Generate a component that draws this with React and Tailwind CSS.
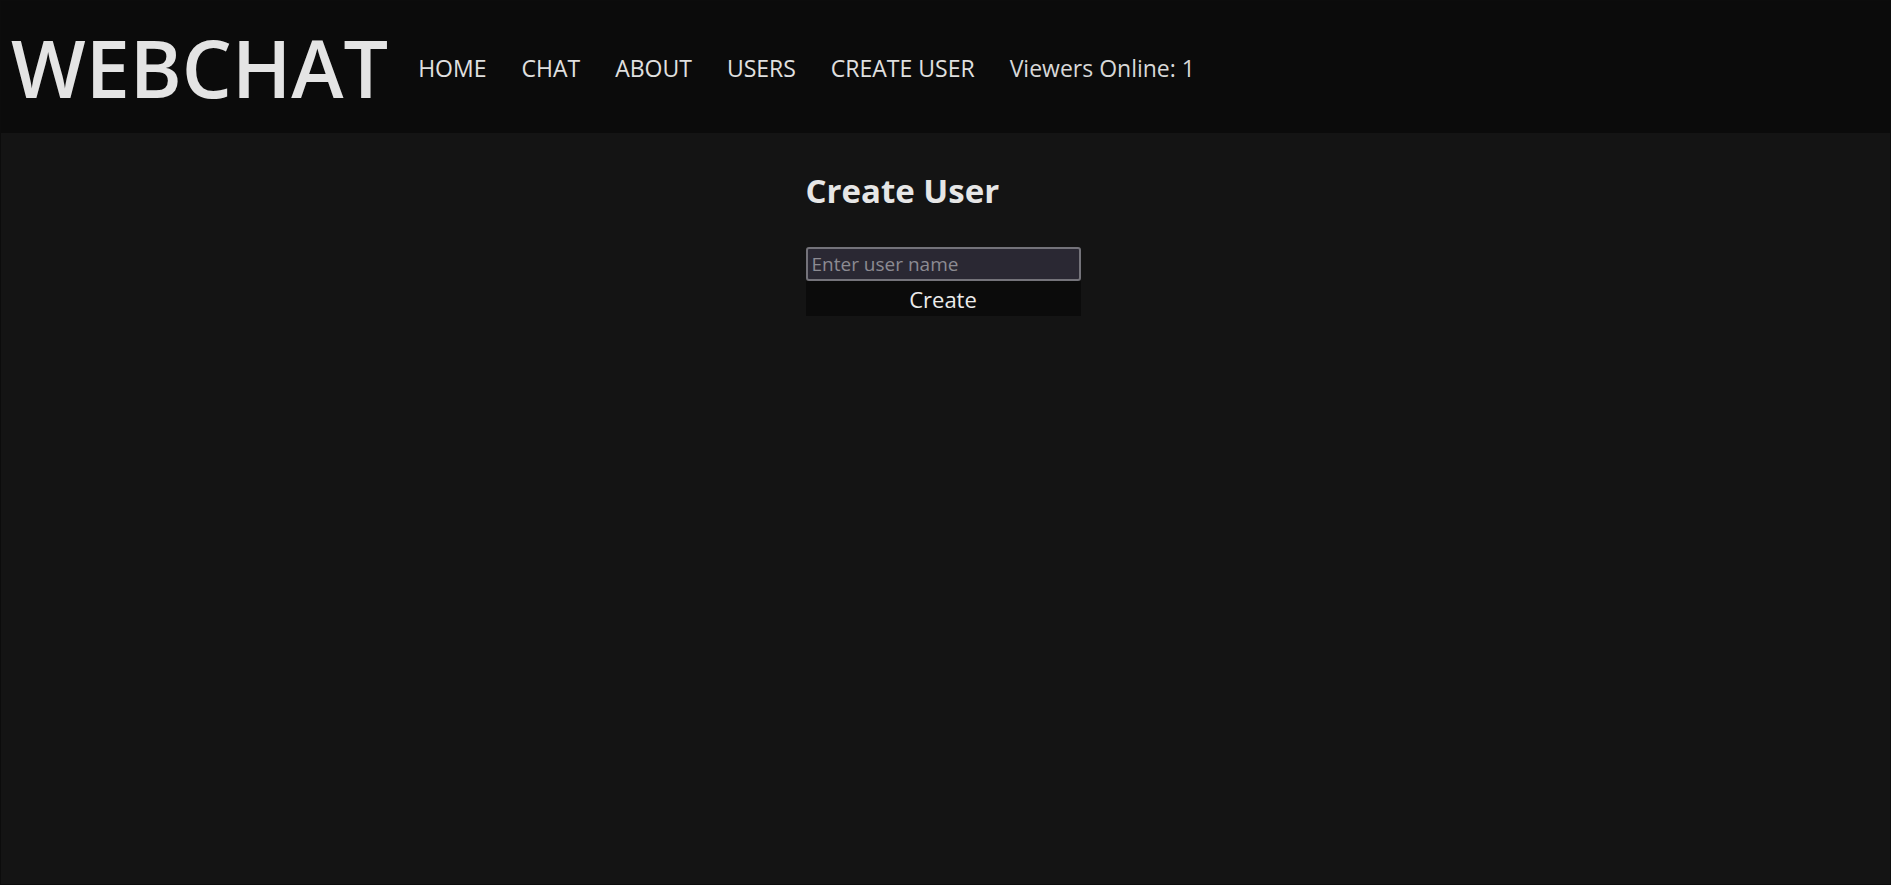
import React, { useState } from "react";

const navItems = ["HOME", "CHAT", "ABOUT", "USERS", "CREATE USER"];

const App = () => {
  const [name, setName] = useState("");

  return (
    <div
      className="w-full min-h-screen bg-[#141414] text-[#e2e2e2] border border-[#0c0c0c]"
      style={{ fontFamily: '"Open Sans", "Noto Sans", sans-serif' }}
    >
      {/* Top bar */}
      <header className="h-[132px] bg-[#0b0b0b] flex items-center pl-[10px] gap-[30px]">
        <h1 className="text-[79px] font-semibold leading-none text-[#e4e4e4]">
          WEBCHAT
        </h1>
        <nav className="flex items-center gap-[35px] text-[23px] pt-[2px]">
          {navItems.map((item) => (
            <a key={item} href="#" className="text-[#e0e0e0] hover:text-white">
              {item}
            </a>
          ))}
          <span className="text-[#d8d8d8]">Viewers Online: 1</span>
        </nav>
      </header>

      {/* Create user form */}
      <main className="flex justify-center pr-[5px]">
        <div className="w-[275px] pt-[36px]">
          <h2 className="text-[33px] font-bold leading-[44px] text-[#e6e6e6]">
            Create User
          </h2>
          <form
            className="mt-[34px] flex flex-col"
            onSubmit={(e) => e.preventDefault()}
          >
            <input
              value={name}
              onChange={(e) => setName(e.target.value)}
              placeholder="Enter user name"
              className="h-[34px] w-full bg-[#2a2833] border-2 border-[#74737a] rounded-[3px] px-[4px] text-[19px] text-[#e0e0e0] placeholder:text-[#8c8b92] outline-none"
            />
            <button
              type="submit"
              className="h-[35px] w-full bg-[#0b0b0b] text-[22px] text-[#ececec] leading-none"
            >
              Create
            </button>
          </form>
        </div>
      </main>
    </div>
  );
};

export default App;
